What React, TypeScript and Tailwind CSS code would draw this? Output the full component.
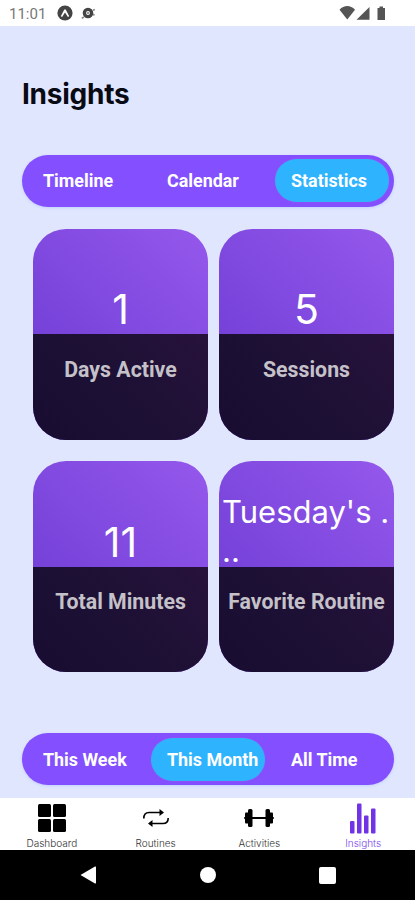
import React from 'react';
import clsx from 'clsx';

interface SegmentedProps {
  items: string[];
  active: string;
  className?: string;
}

const Segmented: React.FC<SegmentedProps> = ({ items, active, className }) => (
  <div
    className={clsx(
      'grid h-[52px] w-[372px] grid-cols-3 items-center rounded-[26px] bg-[#844fff] shadow-[0_1px_3px_rgba(90,150,230,0.25)]',
      className,
    )}
  >
    {items.map((item) => (
      <button
        key={item}
        className={clsx(
          'mx-[5px] h-[43px] rounded-[22px] pt-[2px] pl-4 text-left text-[17.9px] font-bold whitespace-nowrap text-white',
          item === active && 'bg-[#2eb3ff] shadow-[0_0_2px_rgba(170,90,230,0.8)]',
        )}
      >
        {item}
      </button>
    ))}
  </div>
);

interface CardProps {
  label: string;
  children: React.ReactNode;
}

const Card: React.FC<CardProps> = ({ label, children }) => (
  <div className="flex h-[211px] flex-col overflow-hidden rounded-[33px] bg-[linear-gradient(45deg,#692fd0_0%,#7642d9_30%,#9558ec_100%)]">
    <div className="flex h-[105.5px] flex-col justify-end font-['Inter',sans-serif] text-white">{children}</div>
    <div className="flex-1 bg-[linear-gradient(45deg,#180d30,#1c1034_45%,#27123b)] pt-[21.5px] text-center text-[21.3px] leading-[28px] font-bold whitespace-nowrap text-[#c5c1c9]">
      {label}
    </div>
  </div>
);

const Count: React.FC<{ value: number }> = ({ value }) => (
  <p className="pb-[1px] text-center text-[41px] leading-[48px] font-normal">{value}</p>
);

const StatusBar: React.FC = () => (
  <header className="flex h-[26px] items-center bg-white pr-[29px] pl-[9px] text-[#555]">
    <span className="w-[37px] pt-[3px] text-[15px] text-[#777]">11:01</span>
    <svg className="ml-[11px]" width="16" height="16" viewBox="0 0 16 16">
      <circle cx="8" cy="8" r="7.6" fill="#444" />
      <path d="M3.8 11.2 7.3 4.4h1.4l3.5 6.8-1.3.8L8 7.6 5.1 12z" fill="#fff" />
    </svg>
    <svg className="ml-[8px]" width="15" height="14" viewBox="0 0 15 14">
      <circle cx="7" cy="7" r="3.6" fill="none" stroke="#444" strokeWidth="3.4" />
      <circle cx="7" cy="7" r="1" fill="#777" />
      <path d="M.8 12.2 3 11M12 4.3l1.8-.8M12 8.3l1.5.9" stroke="#888" strokeWidth="1.6" />
    </svg>
    <svg className="ml-auto" width="47" height="16" viewBox="0 0 47 16">
      <path d="M.5 4.8C5-.2 11.5-.2 16 4.8L8.25 14.5z" fill="#555" />
      <path d="M17.5 14.7 30.5 2v12.7z" fill="#555" />
      <path d="M38.5 3h2V1.5h3.5V3h2v12h-7.5z" fill="#555" />
    </svg>
  </header>
);

const DashboardIcon = () => (
  <svg width="28" height="28" viewBox="0 0 28 28">
    <rect width="13" height="13" rx="1.5" />
    <rect x="15" width="13" height="13" rx="1.5" />
    <rect y="15" width="13" height="13" rx="1.5" />
    <rect x="15" y="15" width="13" height="13" rx="1.5" />
  </svg>
);

const RoutinesIcon = () => (
  <svg width="28" height="20" viewBox="0 0 28 20">
    <path
      d="M1.8 10.5C1.8 6 3.5 4.5 7 4.5H19M26.2 10c0 4-1.7 5.5-5.2 5.5H9"
      fill="none"
      stroke="#000"
      strokeWidth="1.6"
    />
    <path d="M17.5 1 22 4.5 17.5 8zM10.5 12 6 15.5l4.5 3.5z" />
  </svg>
);

const ActivitiesIcon = () => (
  <svg width="30" height="20" viewBox="0 0 30 20">
    <rect x="4" y="1" width="4.5" height="18" rx="1.5" />
    <rect x="21.5" y="1" width="4.5" height="18" rx="1.5" />
    <rect x="1" y="4.5" width="4" height="11" rx="1" />
    <rect x="25" y="4.5" width="4" height="11" rx="1" />
    <path d="M0 9.2h2v1.6H0zM28 9.2h2v1.6h-2zM8 9.1h14v1.8H8z" />
  </svg>
);

const InsightsIcon = () => (
  <svg width="28" height="31" viewBox="0 0 28 31" fill="#7033e6">
    <rect x="1" y="18" width="4.5" height="12.5" rx="1" />
    <rect x="8" y="0.5" width="4.5" height="30" rx="1" />
    <rect x="15" y="12.5" width="4.5" height="18" rx="1" />
    <rect x="22" y="5.5" width="4.5" height="25" rx="1" />
  </svg>
);

const tabs = [
  { label: 'Dashboard', icon: <DashboardIcon /> },
  { label: 'Routines', icon: <RoutinesIcon /> },
  { label: 'Activities', icon: <ActivitiesIcon /> },
  { label: 'Insights', icon: <InsightsIcon />, active: true },
];

const TabBar: React.FC = () => (
  <nav className="grid h-[52px] grid-cols-4 bg-white">
    {tabs.map(({ label, icon, active }) => (
      <div key={label} className="flex flex-col items-center">
        <div className="flex h-[40px] items-center">{icon}</div>
        <span
          className={clsx(
            "font-['Inter',sans-serif] text-[10px] leading-[11px] font-light",
            active ? 'text-[#7a45ee]' : 'text-[#333]',
          )}
        >
          {label}
        </span>
      </div>
    ))}
  </nav>
);

const SystemNav: React.FC = () => (
  <footer className="flex h-[50px] items-center justify-center gap-[103px] bg-black">
    <svg width="17" height="18" viewBox="0 0 17 18" fill="#fff">
      <path d="M.5 9 15 .5q1-.4 1 .7v15.6q0 1.1-1 .7z" />
    </svg>
    <div className="size-4 rounded-full bg-white" />
    <div className="size-[17px] rounded-[2px] bg-white" />
  </footer>
);

export default function App() {
  return (
    <div className="flex h-[900px] w-[415px] flex-col overflow-hidden bg-[#e1e6ff] font-['Roboto',sans-serif]">
      <StatusBar />
      <main className="flex flex-1 flex-col pl-[22px]">
        <h1 className="mt-[48px] font-['Inter',sans-serif] text-[28px] leading-[40px] font-bold tracking-[-0.25px] text-[#080a14]">
          Insights
        </h1>
        <Segmented className="mt-[40.5px]" items={['Timeline', 'Calendar', 'Statistics']} active="Statistics" />
        <section className="mt-[22px] ml-[11px] grid w-[361px] grid-cols-2 gap-x-[11px] gap-y-[21.5px]">
          <Card label="Days Active">
            <Count value={1} />
          </Card>
          <Card label="Sessions">
            <Count value={5} />
          </Card>
          <Card label="Total Minutes">
            <Count value={11} />
          </Card>
          <Card label="Favorite Routine">
            <p className="-mb-[3.5px] pl-[3px] text-[31px] leading-[39px] whitespace-nowrap">
              Tuesday&apos;s .<br />..
            </p>
          </Card>
        </section>
        <Segmented className="mt-[61px]" items={['This Week', 'This Month', 'All Time']} active="This Month" />
      </main>
      <TabBar />
      <SystemNav />
    </div>
  );
}
